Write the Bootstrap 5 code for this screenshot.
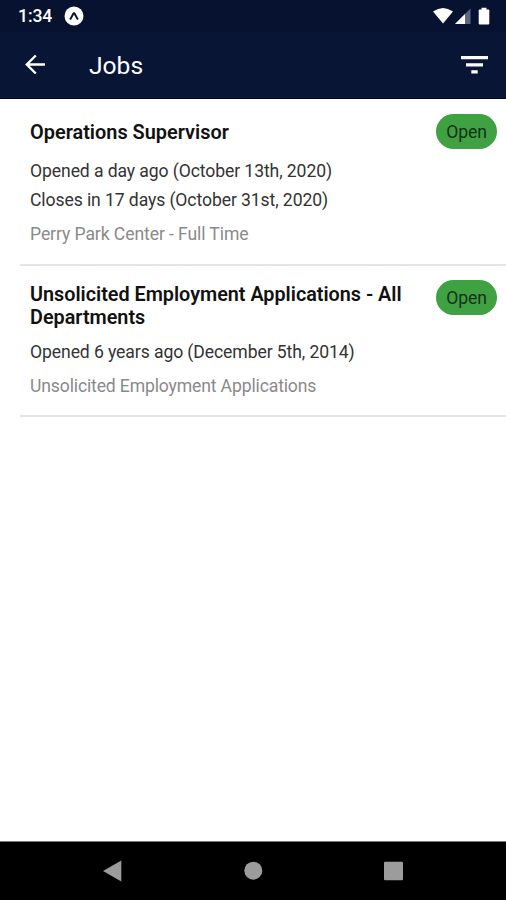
<!DOCTYPE html>
<html lang="en">
<head>
<meta charset="utf-8">
<meta name="viewport" content="width=device-width, initial-scale=1">
<title>Jobs</title>
<link href="https://cdn.jsdelivr.net/npm/bootstrap@5.3.0/dist/css/bootstrap.min.css" rel="stylesheet">
<style>
  body { font-family: Roboto, "Liberation Sans", sans-serif; font-size: 17.6px; letter-spacing: -.1px; font-weight: 400; color: #333; }
  .app-top { background: #081534; height: 99px; border-bottom: 1px solid #03081c; letter-spacing: 0; }
  .status-row { height: 32px; padding: 0 16px 0 18px; background: #071231; }
  .clock { font-size: 17.6px; font-weight: 500; line-height: 32px; width: 46px; letter-spacing: -.1px; }
  .title-row { height: 66px; padding: 0 18px 0 24px; }
  .screen-title { font-size: 24.6px; line-height: 66px; margin-left: 43px; padding-top: 2px; }
  .job { margin-left: 20px; padding: 0 9px 0 10px; border-bottom: 2px solid #e5e5e5; }
  .job-first { height: 167px; }
  .job-second { height: 151px; }
  .job-first .job-text { padding-top: 22px; }
  .job-second .job-text { padding-top: 17px; }
  .job-name { font-size: 19.8px; letter-spacing: 0; line-height: 23px; font-weight: 600; color: #111; width: 385px; margin-bottom: 13px; }
  .job-first .job-name { font-size: 19.92px; }
  .job-second .job-name { margin-bottom: 9px; }
  .job-line { line-height: 29px; }
  .job-place { color: #8a8a8a; line-height: 29px; margin-top: 5px; }
  .job-second .job-place { letter-spacing: -.15px; }
  .state { width: 61px; height: 35px; background: #3fa142; color: #12321a; line-height: 36px; margin-top: 15px; }
  .job-second .state { margin-top: 14px; }
  .android-nav { height: 59px; background: #000; border-top: 1px solid #777; }
</style>
<script src="https://cdn.jsdelivr.net/npm/bootstrap@5.3.0/dist/js/bootstrap.bundle.min.js"></script>
</head>
<body class="bg-white">
<div class="d-flex flex-column vh-100 overflow-hidden">
  <header class="app-top text-white flex-shrink-0">
    <div class="status-row d-flex align-items-center">
      <span class="clock">1:34</span>
      <svg width="20" height="20" viewBox="0 0 20 20" aria-hidden="true"><circle cx="10" cy="10" r="9.500" fill="#fff"/><path d="M6.500 12.800 C8 10.800 8.800 7.700 10 7.100 C11.200 7.700 12 10.800 13.500 12.800" fill="none" stroke="#071231" stroke-width="2" stroke-linecap="round"/></svg>
      <svg class="ms-auto" width="58" height="20" viewBox="432 5 58 20" aria-hidden="true">
        <path d="M433 10.5 Q443 3.5 453 10.5 L443 22.5Z" fill="#fff"/>
        <path d="M470.5 7.5 V23 H455Z" fill="#5d6780"/><path d="M465 13 V23 H455Z" fill="#fff"/>
        <path d="M479.500 8.500 H481.500 V6.700 H486.500 V8.500 H488.500 Q489.300 8.500 489.300 9.300 V22.600 Q489.300 23.400 488.500 23.400 H479.500 Q478.700 23.400 478.700 22.600 V9.300 Q478.700 8.500 479.500 8.500Z" fill="#fff"/>
      </svg>
    </div>
    <div class="title-row d-flex align-items-center">
      <svg width="22" height="22" viewBox="0 0 22 22" fill="none" stroke="#fff" stroke-width="2.4" aria-hidden="true"><path d="M21 10.500 H3 M11.800 1.500 L2.800 10.500 L11.800 19.500"/></svg>
      <h1 class="screen-title mb-0 fw-normal">Jobs</h1>
      <svg class="ms-auto" width="27" height="18" viewBox="0 0 27 18" fill="#fff" aria-hidden="true"><path d="M0 0h27v3.200H0zM5 7.200h17v3.200H5zM10.300 14.200h6.400v3.200h-6.400z"/></svg>
    </div>
  </header>
  <main class="flex-grow-1">
    <article class="job job-first d-flex justify-content-between align-items-start">
      <div class="job-text">
        <h2 class="job-name">Operations Supervisor</h2>
        <div class="job-line">Opened a day ago (October 13th, 2020)</div>
        <div class="job-line">Closes in 17 days (October 31st, 2020)</div>
        <div class="job-place">Perry Park Center - Full Time</div>
      </div>
      <span class="state rounded-pill text-center flex-shrink-0">Open</span>
    </article>
    <article class="job job-second d-flex justify-content-between align-items-start">
      <div class="job-text">
        <h2 class="job-name">Unsolicited Employment Applications - All Departments</h2>
        <div class="job-line">Opened 6 years ago (December 5th, 2014)</div>
        <div class="job-place">Unsolicited Employment Applications</div>
      </div>
      <span class="state rounded-pill text-center flex-shrink-0">Open</span>
    </article>
  </main>
  <nav class="android-nav flex-shrink-0 d-flex justify-content-center align-items-center">
    <svg width="302" height="22" viewBox="102 860 302 22" fill="#9c9c9c" aria-hidden="true"><path d="M103 871 L121.300 860.500 V881.500Z"/><circle cx="253.300" cy="870.700" r="9"/><rect x="384" y="861.700" width="19" height="18.600" rx="1"/></svg>
  </nav>
</div>
</body>
</html>
